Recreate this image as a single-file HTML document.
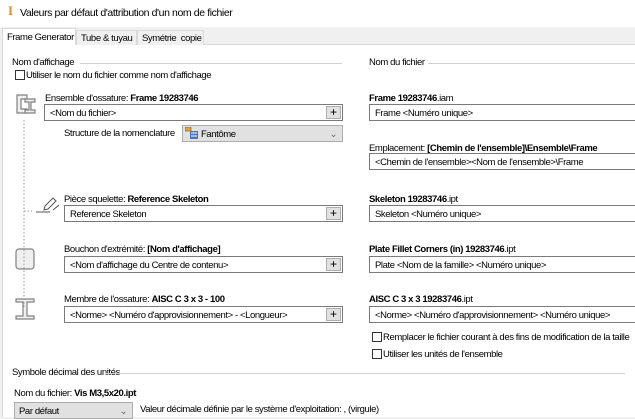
<!DOCTYPE html>
<html><head><meta charset="utf-8"><style>
*{box-sizing:border-box;margin:0;padding:0}
body{width:635px;height:417px;overflow:hidden;background:#f0f0f0;font-family:"Liberation Sans",sans-serif;font-size:9.5px;letter-spacing:-0.4px;color:#000;position:relative}
.a{position:absolute;white-space:nowrap}
.title{left:0;top:0;width:635px;height:27px;background:#fff}
.panel{left:2px;top:44px;width:633px;height:373px;background:#fff;border:1px solid #d9d9d9;border-right:none;border-bottom:none}
.tab{top:30px;height:15px;border:1px solid #d9d9d9;border-bottom:none;background:#f0f0f0;padding:2px 4px 0}
.inp{height:17px;border:1px solid #7a7a7a;background:#fff;padding:3px 5px;overflow:hidden}
.plus{position:absolute;right:1px;top:1px;width:15px;height:13px;background:#e1e1e1;border:1px solid #adadad;font-size:12px;line-height:11px;text-align:center;letter-spacing:0}
.line{height:1px;background:#d0d0d0}
.cb{width:10px;height:10px;border:1px solid #333;background:#fff}
b{font-weight:bold}
.dd{border:1px solid #adadad;background:#e1e1e1;height:17px;padding:3px 4px}
</style></head><body>
<div class="a title"></div>
<div class="a" style="left:8px;top:5px;width:8px;height:12px;color:#e08a2c;font-weight:bold;font-size:13px;line-height:12px;font-family:'Liberation Serif',serif">I</div>
<div class="a" style="left:20px;top:7px;font-size:10.5px">Valeurs par défaut d'attribution d'un nom de fichier</div>
<div class="a panel"></div>
<div class="a tab" style="left:76px;width:61px">Tube &amp; tuyau</div>
<div class="a tab" style="left:137px;width:67px">Symétrie&nbsp; copie</div>
<div class="a tab" style="left:2px;top:28px;height:17px;width:74px;background:#fff;padding-top:3px">Frame Generator</div>

<div class="a" style="left:12px;top:57px">Nom d'affichage</div>
<div class="a line" style="left:80px;top:63px;width:262px"></div>
<div class="a" style="left:369px;top:57px">Nom du fichier</div>
<div class="a line" style="left:428px;top:63px;width:207px"></div>
<div class="a cb" style="left:15px;top:70px"></div>
<div class="a" style="left:26px;top:70px">Utiliser le nom du fichier comme nom d'affichage</div>

<svg class="a" style="left:14px;top:93px" width="24" height="230" viewBox="0 0 24 230">
<g fill="#f0f0f0" stroke="#808080" stroke-width="1.2">
<path d="M3 2h10v4h-6v10h6v4H3z"/><path d="M11 6h10v3h-4v8h4v3H11v-3h4V9h-4z"/>
<rect x="2" y="156" width="18" height="20" rx="3"/>
<path d="M2 206h18v3h-7v14h7v3H2v-3h7v-14H2z"/>
</g>
<path d="M10 27V215" stroke="#999" stroke-dasharray="1.5,2" fill="none"/>
<path d="M10 118h8" stroke="#999" stroke-dasharray="1.5,2"/>
</svg>
<svg class="a" style="left:33px;top:195px" width="28" height="28" viewBox="0 0 28 28">
<path d="M3 17h14" stroke="#555" fill="none"/><path d="M12 11l8-8 3 3-8 8-4 1z" fill="#fff" stroke="#555"/><path d="M20 15l6-5" stroke="#555"/>
</svg>

<div class="a" style="left:45px;top:93px">Ensemble d'ossature: <b>Frame 19283746</b></div>
<div class="a inp" style="left:44px;top:104px;width:299px">&lt;Nom du fichier&gt;<div class="plus">+</div></div>
<div class="a" style="left:64px;top:128px">Structure de la nomenclature</div>
<div class="a dd" style="left:182px;top:125px;width:161px;padding-left:18px">Fantôme<span style="position:absolute;right:5px;color:#666">⌄</span></div>
<svg class="a" style="left:185px;top:127px" width="14" height="13"><rect x="0" y="0" width="6" height="4" fill="#e8a23a" stroke="#555" stroke-width=".6"/><rect x="5" y="4" width="8" height="8" fill="#4a77b5"/><path d="M6 6h6M6 9h6" stroke="#fff"/></svg>

<div class="a" style="left:64px;top:194px">Pièce squelette: <b>Reference Skeleton</b></div>
<div class="a inp" style="left:64px;top:205px;width:279px">Reference Skeleton<div class="plus">+</div></div>
<div class="a" style="left:64px;top:244px">Bouchon d'extrémité: <b>[Nom d'affichage]</b></div>
<div class="a inp" style="left:64px;top:256px;width:279px">&lt;Nom d'affichage du Centre de contenu&gt;<div class="plus">+</div></div>
<div class="a" style="left:64px;top:294px">Membre de l'ossature: <b>AISC C 3 x 3 - 100</b></div>
<div class="a inp" style="left:64px;top:306px;width:279px">&lt;Norme&gt; &lt;Numéro d'approvisionnement&gt; - &lt;Longueur&gt;<div class="plus">+</div></div>

<div class="a" style="left:369px;top:93px"><b>Frame 19283746</b>.iam</div>
<div class="a inp" style="left:369px;top:104px;width:266px;border-right:none">Frame &lt;Numéro unique&gt;</div>
<div class="a" style="left:369px;top:143px">Emplacement: <b>[Chemin de l'ensemble]\Ensemble\Frame</b></div>
<div class="a inp" style="left:369px;top:153px;width:266px;border-right:none">&lt;Chemin de l'ensemble&gt;&lt;Nom de l'ensemble&gt;\Frame</div>
<div class="a" style="left:369px;top:194px"><b>Skeleton 19283746</b>.ipt</div>
<div class="a inp" style="left:369px;top:205px;width:266px;border-right:none">Skeleton &lt;Numéro unique&gt;</div>
<div class="a" style="left:369px;top:244px"><b>Plate Fillet Corners (in) 19283746</b>.ipt</div>
<div class="a inp" style="left:369px;top:256px;width:266px;border-right:none">Plate &lt;Nom de la famille&gt; &lt;Numéro unique&gt;</div>
<div class="a" style="left:369px;top:294px"><b>AISC C 3 x 3 19283746</b>.ipt</div>
<div class="a inp" style="left:369px;top:306px;width:266px;border-right:none">&lt;Norme&gt; &lt;Numéro d'approvisionnement&gt; &lt;Numéro unique&gt;</div>

<div class="a cb" style="left:372px;top:332px"></div>
<div class="a" style="left:383px;top:332px">Remplacer le fichier courant à des fins de modification de la taille</div>
<div class="a cb" style="left:372px;top:349px"></div>
<div class="a" style="left:383px;top:349px">Utiliser les unités de l'ensemble</div>

<div class="a" style="left:12px;top:367px">Symbole décimal des unités</div>
<div class="a line" style="left:105px;top:373px;width:520px"></div>
<div class="a" style="left:14px;top:388px">Nom du fichier: <b>Vis M3,5x20.ipt</b></div>
<div class="a dd" style="left:14px;top:402px;width:119px">Par défaut<span style="position:absolute;right:5px;color:#666">⌄</span></div>
<div class="a" style="left:140px;top:404px">Valeur décimale définie par le système d'exploitation: , (virgule)</div>
</body></html>
